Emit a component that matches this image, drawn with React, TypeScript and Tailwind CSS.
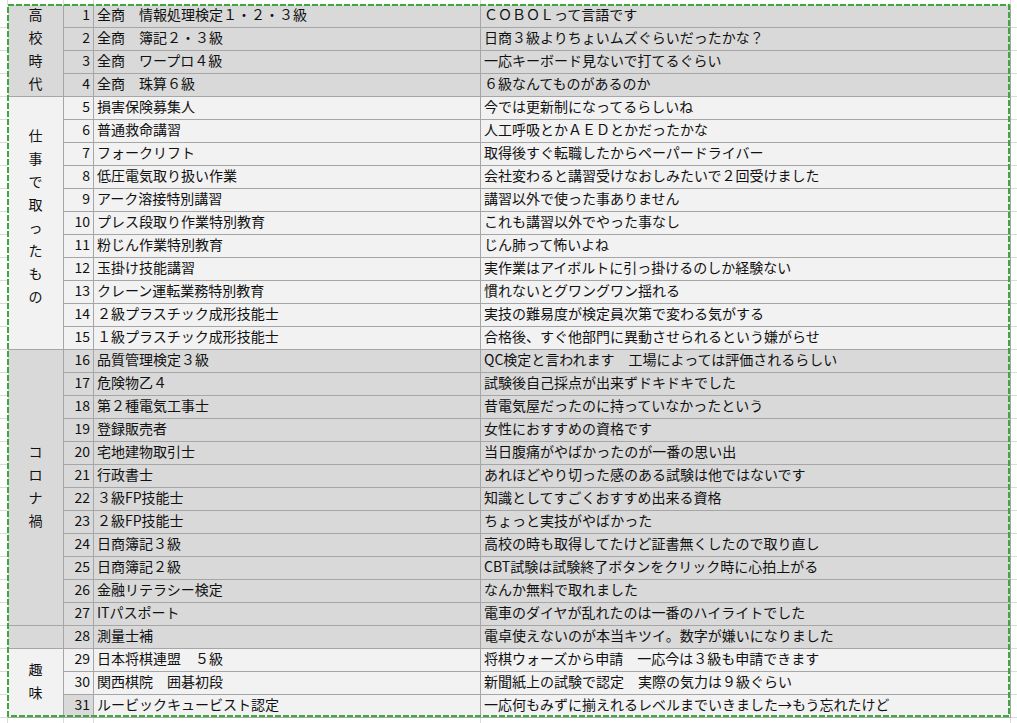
import React from "react";

type Row = { n: number; item: string; note: string };

const rows: Row[] = [
  { n: 1, item: "全商　情報処理検定１・２・３級", note: "ＣＯＢＯＬって言語です" },
  { n: 2, item: "全商　簿記２・３級", note: "日商３級よりちょいムズぐらいだったかな？" },
  { n: 3, item: "全商　ワープロ４級", note: "一応キーボード見ないで打てるぐらい" },
  { n: 4, item: "全商　珠算６級", note: "６級なんてものがあるのか" },
  { n: 5, item: "損害保険募集人", note: "今では更新制になってるらしいね" },
  { n: 6, item: "普通救命講習", note: "人工呼吸とかＡＥＤとかだったかな" },
  { n: 7, item: "フォークリフト", note: "取得後すぐ転職したからペーパードライバー" },
  { n: 8, item: "低圧電気取り扱い作業", note: "会社変わると講習受けなおしみたいで２回受けました" },
  { n: 9, item: "アーク溶接特別講習", note: "講習以外で使った事ありません" },
  { n: 10, item: "プレス段取り作業特別教育", note: "これも講習以外でやった事なし" },
  { n: 11, item: "粉じん作業特別教育", note: "じん肺って怖いよね" },
  { n: 12, item: "玉掛け技能講習", note: "実作業はアイボルトに引っ掛けるのしか経験ない" },
  { n: 13, item: "クレーン運転業務特別教育", note: "慣れないとグワングワン揺れる" },
  { n: 14, item: "２級プラスチック成形技能士", note: "実技の難易度が検定員次第で変わる気がする" },
  { n: 15, item: "１級プラスチック成形技能士", note: "合格後、すぐ他部門に異動させられるという嫌がらせ" },
  { n: 16, item: "品質管理検定３級", note: "QC検定と言われます　工場によっては評価されるらしい" },
  { n: 17, item: "危険物乙４", note: "試験後自己採点が出来ずドキドキでした" },
  { n: 18, item: "第２種電気工事士", note: "昔電気屋だったのに持っていなかったという" },
  { n: 19, item: "登録販売者", note: "女性におすすめの資格です" },
  { n: 20, item: "宅地建物取引士", note: "当日腹痛がやばかったのが一番の思い出" },
  { n: 21, item: "行政書士", note: "あれほどやり切った感のある試験は他ではないです" },
  { n: 22, item: "３級FP技能士", note: "知識としてすごくおすすめ出来る資格" },
  { n: 23, item: "２級FP技能士", note: "ちょっと実技がやばかった" },
  { n: 24, item: "日商簿記３級", note: "高校の時も取得してたけど証書無くしたので取り直し" },
  { n: 25, item: "日商簿記２級", note: "CBT試験は試験終了ボタンをクリック時に心拍上がる" },
  { n: 26, item: "金融リテラシー検定", note: "なんか無料で取れました" },
  { n: 27, item: "ITパスポート", note: "電車のダイヤが乱れたのは一番のハイライトでした" },
  { n: 28, item: "測量士補", note: "電卓使えないのが本当キツイ。数字が嫌いになりました" },
  { n: 29, item: "日本将棋連盟　５級", note: "将棋ウォーズから申請　一応今は３級も申請できます" },
  { n: 30, item: "関西棋院　囲碁初段", note: "新聞紙上の試験で認定　実際の気力は９級ぐらい" },
  { n: 31, item: "ルービックキュービスト認定", note: "一応何もみずに揃えれるレベルまでいきました→もう忘れたけど" },
];

type Group = { start: number; label: string; span: string; dark: boolean; shift: string };

const groups: Group[] = [
  { start: 1, label: "高校時代", span: "row-span-4", dark: true, shift: "pb-[4px]" },
  { start: 5, label: "仕事で取ったもの", span: "row-span-11", dark: false, shift: "pb-[14px]" },
  { start: 16, label: "コロナ禍", span: "row-span-12", dark: true, shift: "pb-[4px]" },
  { start: 28, label: "", span: "row-span-1", dark: true, shift: "" },
  { start: 29, label: "趣味", span: "row-span-3", dark: false, shift: "pb-[4px]" },
];

const isDark = (n: number) => n <= 4 || (n >= 16 && n <= 28);

export default function App() {
  const edgeCols = [
    "border-r border-[#dadada]",
    "border-r border-[#dadada]",
    "border-r border-[#dadada]",
    "border-r border-[#dadada]",
    "border-r border-[#dadada]",
    "",
  ];
  return (
    <div className="relative w-[1017px] h-[723px] overflow-hidden bg-white text-[#111] font-['Noto_Sans_CJK_JP',sans-serif] text-[14px]">
      <div className="grid grid-cols-[8px_56px_30px_387px_530px_6px] grid-rows-[5px_repeat(31,23px)_5px]">
        {edgeCols.map((c, i) => (
          <div key={"t" + i} className={c} />
        ))}
        {rows.map((r) => {
          const g = groups.find((x) => x.start === r.n);
          const dark = isDark(r.n);
          const bg = dark ? "bg-[#d9d9d9]" : "bg-[#f2f2f2]";
          const numBg = r.n === 31 ? "bg-[#d9d9d9]" : bg;
          return (
            <React.Fragment key={r.n}>
              <div className="col-start-1 border-b border-[#dadada]" />
              {g && (
                <div
                  className={`col-start-2 ${g.span} ${g.dark ? "bg-[#d9d9d9]" : "bg-[#f2f2f2]"} border-r border-b border-[#a6a6a6] flex flex-col items-center justify-center leading-[23px] ${g.shift}`}
                >
                  {g.label.split("").map((ch, i) => (
                    <span key={i} className="block">
                      {ch}
                    </span>
                  ))}
                </div>
              )}
              <div className={`col-start-3 ${numBg} border-r border-b border-[#a6a6a6] flex items-center justify-end pr-[3px] pb-[4px] leading-none`}>
                {r.n}
              </div>
              <div className={`col-start-4 ${bg} border-r border-b border-[#a6a6a6] flex items-center pl-[3px] pb-[4px] whitespace-pre overflow-hidden leading-none`}>
                {r.item}
              </div>
              <div className={`col-start-5 ${bg} border-r border-b border-[#a6a6a6] flex items-center pl-[3px] pb-[4px] whitespace-pre overflow-hidden leading-none`}>
                {r.note}
              </div>
              <div className="col-start-6 border-b border-[#dadada]" />
            </React.Fragment>
          );
        })}
        {edgeCols.map((c, i) => (
          <div key={"b" + i} className={c} />
        ))}
      </div>
      <svg className="absolute left-0 top-0 pointer-events-none" width="1017" height="723">
        <rect
          x="8"
          y="5"
          width="1001"
          height="711"
          fill="none"
          stroke="#3ea83e"
          strokeWidth="2"
          strokeDasharray="6 2"
        />
      </svg>
    </div>
  );
}
